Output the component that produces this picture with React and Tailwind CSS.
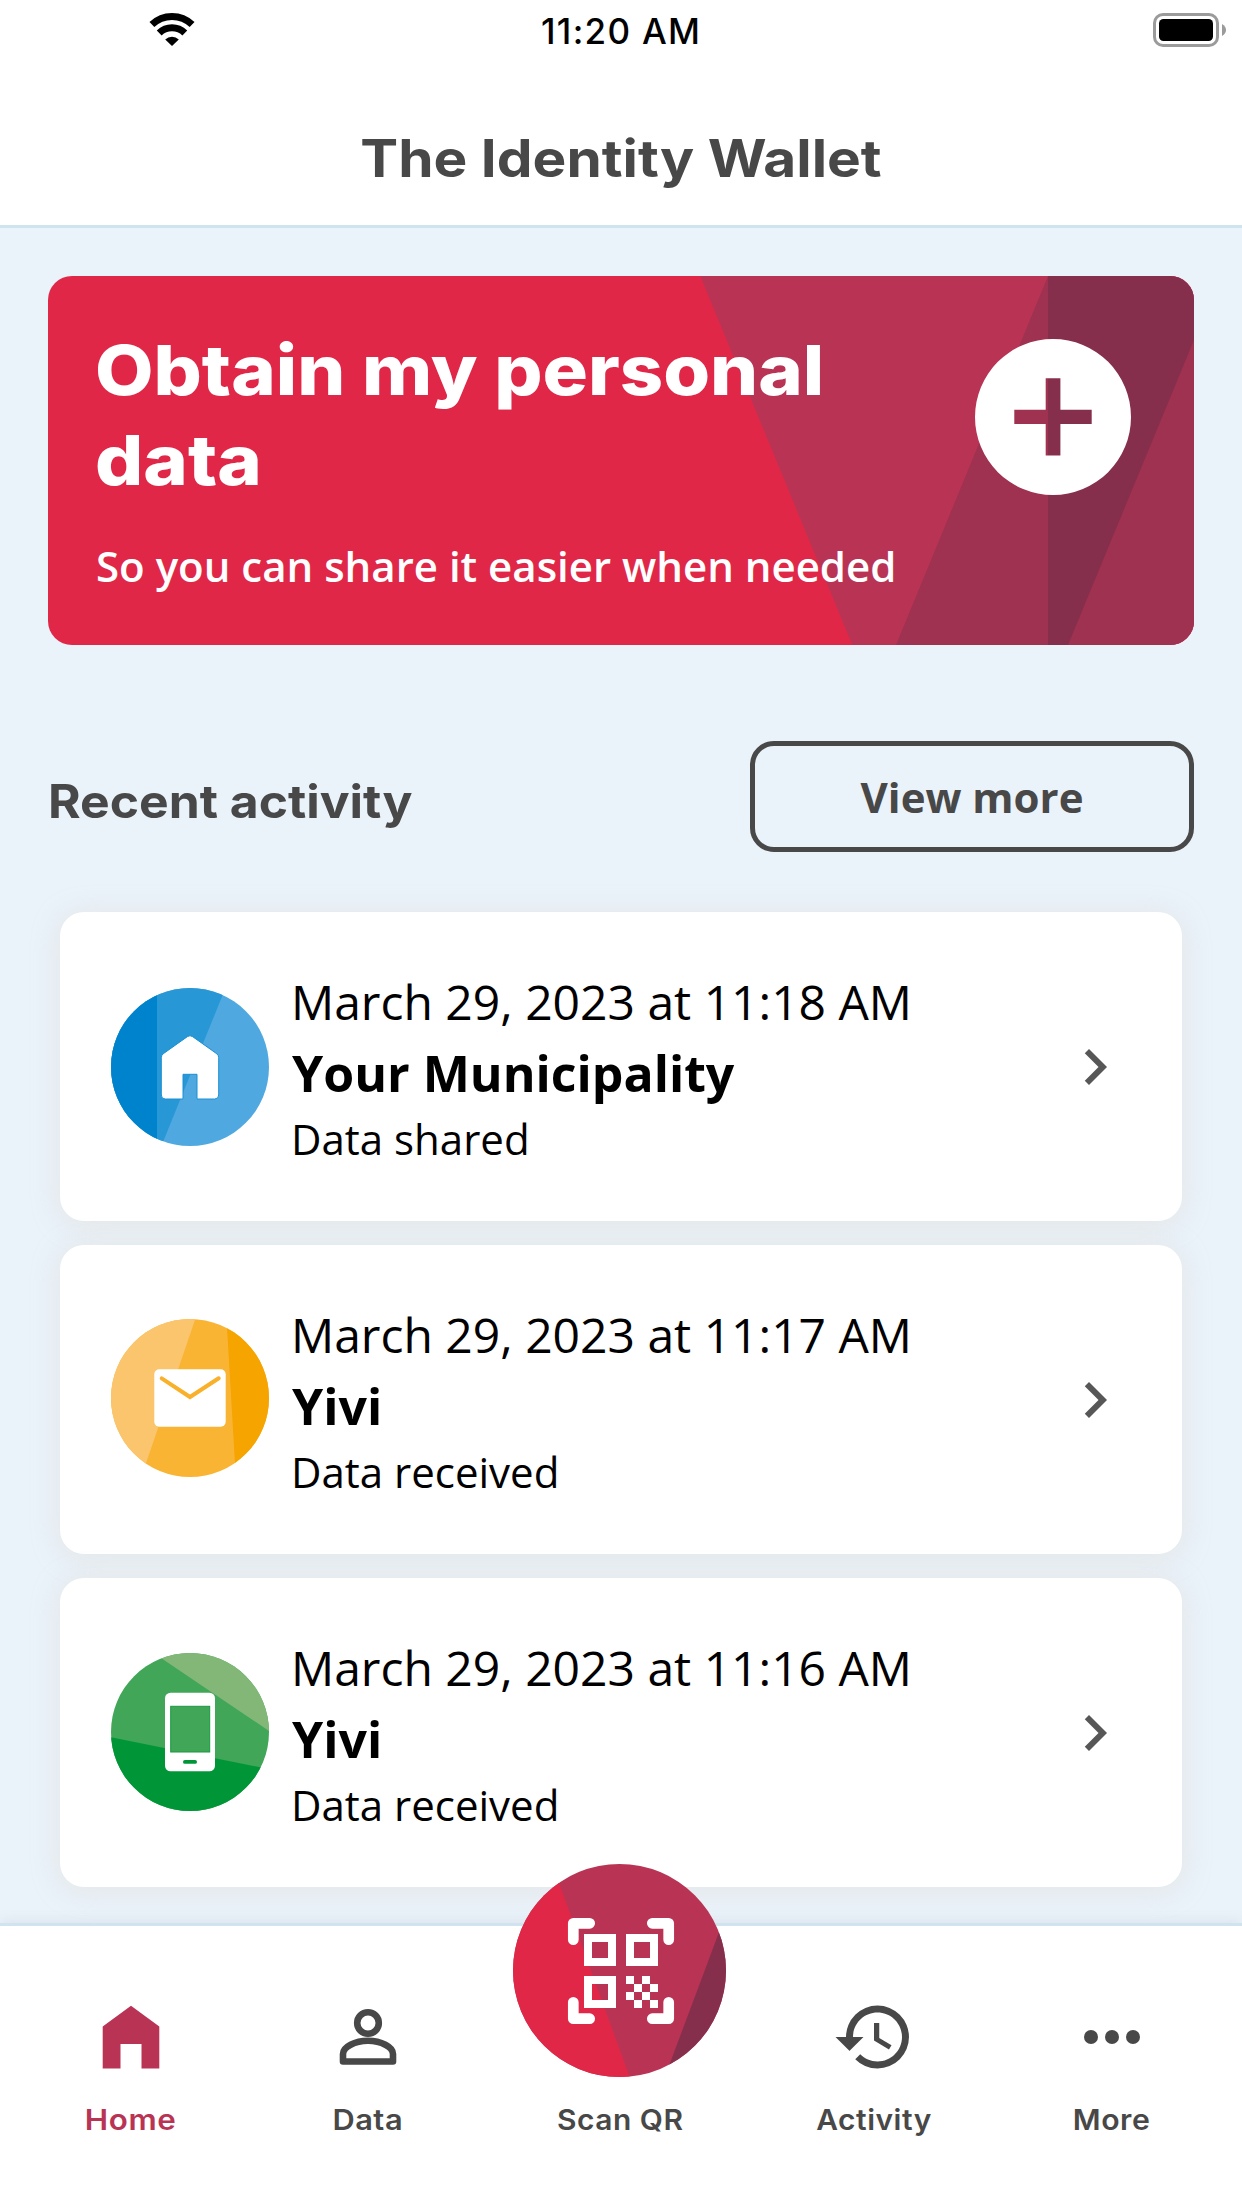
function StatusBar() {
  return (
    <div className="flex h-[60px] items-center justify-between pl-[149px] pr-[15px]">
      <div className="w-[393px]">
        <svg className="h-[60px] w-[48px]" viewBox="0 0 48 60">
          <g fill="none" stroke="#000" strokeWidth="7">
            <path d="M2.9 24.6a29 29 0 0 1 40.2 0" />
            <path d="M10.2 33a18.5 18.5 0 0 1 25.6 0" />
          </g>
          <path d="M23 46l-6.8-6.6a9.8 9.8 0 0 1 13.6 0z" />
        </svg>
      </div>
      <div className="mt-[2px] whitespace-nowrap font-['Inter',sans-serif] text-[35px] font-medium leading-[44px] tracking-[1.3px] text-black">11:20 AM</div>
      <div className="flex w-[527px] justify-end">
        <svg className="h-[60px] w-[74px]" viewBox="0 0 74 60">
          <rect x="1.5" y="14.5" width="63" height="31" rx="8.5" fill="none" stroke="#9b9b9b" strokeWidth="3" />
          <rect x="6" y="19" width="54" height="22" rx="4.5" fill="#000" />
          <path d="M69 24q4 2.4 4 6t-4 6z" fill="#9b9b9b" />
        </svg>
      </div>
    </div>
  );
}

function HeroCard() {
  return (
    <div className="relative h-[369px] overflow-hidden rounded-[24px] bg-[#e12747]">
      <svg className="absolute inset-0 h-full w-full" viewBox="0 0 1146 369">
        <path d="M652.3 0H1146V369H804.3z" fill="#b93454" />
        <path d="M1000 0V369H848z" fill="#9f3151" />
        <path d="M1146 60V369H1010z" fill="#9f3151" />
        <path d="M1000 0H1146V64L1020 369H1000z" fill="#862f4d" />
        <path fill="#fff" fillRule="evenodd" d="M927 141a78 78 0 1 0 156 0a78 78 0 1 0-156 0zM966.3 133.7H997.7V102.3H1012.4V133.7H1043.7V148H1012.4V179.5H997.7V148H966.3z" />
      </svg>
      <div className="relative pl-[48px] pt-[49px] text-white">
        <h2 className="-ml-[1px] w-[690px] origin-left scale-x-[1.098] font-['Inter',sans-serif] text-[69px] font-extrabold leading-[90px]">Obtain my personal data</h2>
        <p className="mt-[34px] whitespace-nowrap font-['Open_Sans',sans-serif] text-[42px] font-semibold leading-[54px]">So you can share it easier when needed</p>
      </div>
    </div>
  );
}

function HouseIcon() {
  return (
    <>
      <path d="M0 0H158V158H0z" fill="#4fa9e0" />
      <path d="M0 0H114.5L50.4 158H0z" fill="#2897d6" />
      <path d="M0 0H46V158H0z" fill="#0083cd" />
      <path d="M76.3 48.7q2.7-2 5.4 0l24 17q2 1.6 2 4v37.3q0 4-4 4H86V86.3H72V111H54.3q-4 0-4-4V69.7q0-2.4 2-4z" fill="#fff" stroke="#1a8fd2" strokeWidth="1" />
      <path d="M72.5 110.3h13v1.4h-13z" fill="#4fa9e0" />
    </>
  );
}

function MailIcon() {
  return (
    <>
      <path d="M0 0H158V158H0z" fill="#f9b434" />
      <path d="M0 0H84.3L30.3 158H0z" fill="#fbc56d" />
      <path d="M115.5 0H158V158H124.8z" fill="#f6a400" />
      <rect x="43.3" y="50.3" width="71.4" height="57.4" rx="5" fill="#fff" />
      <path d="M50.7 59.3L79 78L107.7 59.3" fill="none" stroke="#f9b02a" strokeWidth="4" strokeLinecap="round" />
    </>
  );
}

function PhoneIcon() {
  return (
    <>
      <path d="M0 0H158V158H0z" fill="#41a657" />
      <path d="M42.6 0H158V78z" fill="#82b777" />
      <path d="M0 84.3L158 116V158H0z" fill="#009638" />
      <rect x="54" y="39.7" width="50" height="78.6" rx="5.5" fill="#fff" />
      <rect x="59.7" y="53.3" width="39" height="45.7" fill="#41a657" stroke="#189a40" strokeWidth="1" />
      <rect x="72" y="107" width="14" height="3.8" rx="1.9" fill="#009638" />
    </>
  );
}

const activities = [
  { id: 1, Icon: HouseIcon, nudge: "", date: "March 29, 2023 at 11:18 AM", name: "Your Municipality", status: "Data shared" },
  { id: 2, Icon: MailIcon, nudge: "mb-[4px]", date: "March 29, 2023 at 11:17 AM", name: "Yivi", status: "Data received" },
  { id: 3, Icon: PhoneIcon, nudge: "mb-[2px]", date: "March 29, 2023 at 11:16 AM", name: "Yivi", status: "Data received" },
];

function ActivityCard({ Icon, nudge, date, name, status }) {
  return (
    <div className="flex h-[309px] items-center rounded-[24px] bg-white pl-[51px] pr-[51px] shadow-[0_3px_28px_rgba(215,210,195,0.38)]">
      <svg className={`h-[158px] w-[158px] shrink-0 rounded-full ${nudge}`} viewBox="0 0 158 158">
        <Icon />
      </svg>
      <div className="ml-[22px] grow whitespace-nowrap font-['Open_Sans',sans-serif] text-black">
        <div className="text-[48px] leading-[71px]">{date}</div>
        <div className="pl-[1px] text-[50px] font-bold leading-[72px]">{name}</div>
        <div className="text-[42px] leading-[59px]">{status}</div>
      </div>
      <svg className="h-[72px] w-[72px] shrink-0" viewBox="0 0 24 24" fill="#575757">
        <path d="M10 6L8.59 7.41 13.17 12l-4.58 4.59L10 18l6-6z" />
      </svg>
    </div>
  );
}

function ScanIcon() {
  return (
    <svg className="h-[213px] w-[213px] rounded-full" viewBox="0 0 213 213">
      <path d="M0 0H213V213H0z" fill="#b93454" />
      <path d="M0 0H39L116.7 213H0z" fill="#e12747" />
      <path d="M213 49.5V213H151.8z" fill="#862f4d" />
      <g fill="none" stroke="#fff" strokeWidth="10.7" strokeLinecap="round" strokeLinejoin="round">
        <path d="M60.3 75.7V59.3H76.7" />
        <path d="M139.3 59.3H155.7V75.7" />
        <path d="M60.3 138.3V154.7H76.7" />
        <path d="M139.3 154.7H155.7V138.3" />
      </g>
      <g fill="none" stroke="#fff" strokeWidth="8">
        <path d="M75 74h24v24H75z" />
        <path d="M117 74h24v24h-24z" />
        <path d="M75 116h24v24H75z" />
      </g>
      <path fill="#fff" d="M113 112h8v8h-8zM129 112h8v8h-8zM121 120h8v8h-8zM137 120h8v8h-8zM113 128h8v8h-8zM129 128h8v8h-8zM121 136h8v8h-8zM137 136h8v8h-8z" />
    </svg>
  );
}

function NavItem({ label, width, active, stretch, children }) {
  return (
    <div className={`flex flex-col items-center ${width} ${active ? "text-[#b93454]" : "text-[#484848]"}`}>
      <svg className="mt-[69px] h-[84px] w-[84px]" viewBox="0 0 84 84" fill="currentColor">{children}</svg>
      <span className={`mt-[23px] whitespace-nowrap font-['Inter',sans-serif] text-[28.5px] font-semibold leading-[36px] tracking-[0.5px] ${stretch}`}>{label}</span>
    </div>
  );
}

function BottomNav() {
  return (
    <nav className="relative z-10 flex h-[285px] border-t-[3px] border-[#cfe4ef] bg-white px-[12px] shadow-[0_-2px_12px_rgba(120,120,140,0.12)]">
      <NavItem label="Home" width="w-[237px]" active stretch="scale-x-[1.1]">
        <path d="M42 10.7L70.3 31.5V73.5H52.5V49H31.5V73.5H13.7V31.5z" />
      </NavItem>
      <NavItem label="Data" width="w-[237px]" stretch="scale-x-[1.08]">
        <g fill="none" stroke="currentColor" strokeWidth="6.6">
          <circle cx="42" cy="28" r="10.8" />
          <path d="M17 66.5V59C17 52 29 45.8 42 45.8S67 52 67 59V66.5z" strokeLinejoin="round" />
        </g>
      </NavItem>
      <div className="flex w-[269px] flex-col items-center text-[#484848]">
        <div className="-mt-[62px] pr-[2px]"><ScanIcon /></div>
        <span className="mt-[25px] scale-x-[1.05] whitespace-nowrap font-['Inter',sans-serif] text-[28.5px] font-semibold leading-[36px] tracking-[0.5px]">Scan QR</span>
      </div>
      <NavItem label="Activity" width="w-[238px]" stretch="scale-x-[1.05]">
        <path transform="scale(3.5)" d="M13 3a9 9 0 0 0-9 9H1l3.89 3.89.07.14L9 12H6c0-3.87 3.13-7 7-7s7 3.13 7 7-3.13 7-7 7c-1.93 0-3.68-.79-4.94-2.06l-1.42 1.42A8.954 8.954 0 0 0 13 21a9 9 0 0 0 0-18zm-1 5v5l4.28 2.54.72-1.21-3.5-2.08V8H12z" />
      </NavItem>
      <NavItem label="More" width="w-[237px]" stretch="scale-x-[1.06]">
        <circle cx="21" cy="42" r="7" />
        <circle cx="42" cy="42" r="7" />
        <circle cx="63" cy="42" r="7" />
      </NavItem>
    </nav>
  );
}

export default function App() {
  return (
    <div className="flex h-[2208px] w-[1242px] flex-col overflow-hidden bg-[#eaf2fa]">
      <header className="h-[228px] shrink-0 border-b-[3px] border-[#cfe4ed] bg-white">
        <StatusBar />
        <h1 className="mt-[63px] scale-x-[1.092] text-center font-['Inter',sans-serif] text-[52px] font-bold leading-[72px] text-[#484848]">The Identity Wallet</h1>
      </header>
      <main className="h-[1695px] shrink-0 px-[48px] pt-[48px]">
        <HeroCard />
        <div className="mt-[96px] flex h-[111px] items-center justify-between">
          <h2 className="mt-[8px] origin-left scale-x-[1.071] whitespace-nowrap font-['Inter',sans-serif] text-[46.5px] font-bold leading-[60px] text-[#484848]">Recent activity</h2>
          <button className="h-[111px] w-[444px] rounded-[24px] border-[5px] border-[#484848] font-['Open_Sans',sans-serif] text-[42px] font-bold text-[#484848]">View more</button>
        </div>
        <div className="mt-[60px] flex flex-col gap-[24px] px-[12px]">
          {activities.map((a) => (
            <ActivityCard key={a.id} {...a} />
          ))}
        </div>
      </main>
      <BottomNav />
    </div>
  );
}
